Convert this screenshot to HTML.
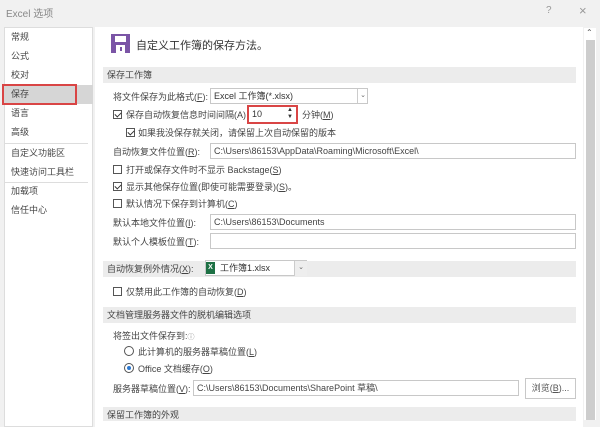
<!DOCTYPE html><html><head><meta charset="utf-8"><style>
*{margin:0;padding:0;box-sizing:border-box}
body{width:600px;height:420px;overflow:hidden;background:#f1f1f1;font-family:"Liberation Sans","Noto Sans CJK SC",sans-serif;font-size:9px;color:#444;position:relative}
.a{position:absolute;white-space:nowrap}
.nav{position:absolute;left:4px;top:27px;width:89px;height:400px;background:#fff;border:1px solid #ddd}
.main{position:absolute;left:95px;top:27px;width:488px;height:400px;background:#fff}
.bar{position:absolute;left:103px;width:473px;height:16px;background:#ececec;font-size:9px;padding:0 4px;line-height:16px;color:#444}
.inp{position:absolute;height:16px;border:1px solid #c8c8c8;background:#fff;padding:0 3px;line-height:14px;font-size:9px;color:#444}
.cb{position:absolute;width:9px;height:9px;border:1px solid #555;background:#fff}
.cb.on::after{content:"";position:absolute;left:2px;top:0px;width:3px;height:5px;border:solid #333;border-width:0 1px 1px 0;transform:rotate(45deg)}
.rd{position:absolute;width:10px;height:10px;border:1px solid #555;border-radius:50%;background:#fff}
.sep{position:absolute;left:4px;width:84px;height:1px;background:#ddd}
</style></head><body>
<div class="a" style="left:6px;top:5px;color:#888;font-size:10px">Excel 选项</div>
<div class="a" style="left:546px;top:5px;color:#999;font-size:10px">?</div>
<div class="a" style="left:579px;top:3px;color:#999;font-size:13px">×</div>
<div class="nav"></div>
<div class="a" style="left:4px;top:85px;width:89px;height:19px;background:#d6d6d6"></div>
<div class="a" style="left:2px;top:84px;width:75px;height:21px;border:2px solid #d94545"></div>
<div class="a" style="left:11px;top:28px;line-height:19px;color:#444">常规<br>公式<br>校对<br>保存<br>语言<br>高级</div>
<div class="sep" style="top:143px"></div>
<div class="a" style="left:11px;top:144px;line-height:19px;color:#444">自定义功能区<br>快速访问工具栏</div>
<div class="sep" style="top:182px"></div>
<div class="a" style="left:11px;top:182px;line-height:19px;color:#444">加载项<br>信任中心</div>
<div class="main"></div>
<div class="a" style="left:584px;top:28px;width:12px;height:392px;background:#fff"></div>
<div class="a" style="left:586px;top:40px;width:9px;height:380px;background:#cdcdcd"></div>
<div class="a" style="left:586px;top:28px;font-size:8px;color:#555">⌃</div>
<svg class="a" style="left:111px;top:34px" width="19" height="19" viewBox="0 0 19 19"><rect width="19" height="19" fill="#7b55a6"/><rect x="4" y="2" width="11" height="6" fill="#fff"/><rect x="5" y="11" width="9" height="8" fill="#fff"/><rect x="9" y="13" width="2" height="4" fill="#7b55a6"/></svg>
<div class="a" style="left:136px;top:37px;font-size:11px;color:#333">自定义工作簿的保存方法。</div>
<div class="bar" style="top:67px">保存工作簿</div>
<div class="a" style="left:113px;top:90px">将文件保存为此格式(<u>F</u>):</div>
<div class="inp" style="left:210px;top:88px;width:158px;color:#333">Excel 工作簿(*.xlsx)</div>
<div class="a" style="left:357px;top:89px;width:11px;height:14px;border-left:1px solid #ccc;font-size:7px;color:#666;text-align:center;line-height:14px">⌄</div>
<div class="cb on" style="left:113px;top:110px"></div>
<div class="a" style="left:126px;top:108px">保存自动恢复信息时间间隔(A)</div>
<div class="a" style="left:247px;top:105px;width:51px;height:19px;border:2px solid #d94545;background:#fff;padding:0 3px;line-height:15px;color:#333">10</div>
<div class="a" style="left:285px;top:107px;width:10px;height:15px;font-size:6px;line-height:7px;color:#333;text-align:center">▲<br>▼</div>
<div class="a" style="left:302px;top:108px">分钟(<u>M</u>)</div>
<div class="cb on" style="left:126px;top:128px"></div>
<div class="a" style="left:138px;top:126px">如果我没保存就关闭，请保留上次自动保留的版本</div>
<div class="a" style="left:113px;top:145px">自动恢复文件位置(<u>R</u>):</div>
<div class="inp" style="left:210px;top:143px;width:366px">C:\Users\86153\AppData\Roaming\Microsoft\Excel\</div>
<div class="cb" style="left:113px;top:165px"></div>
<div class="a" style="left:126px;top:163px">打开或保存文件时不显示 Backstage(<u>S</u>)</div>
<div class="cb on" style="left:113px;top:182px"></div>
<div class="a" style="left:126px;top:180px">显示其他保存位置(即使可能需要登录)(<u>S</u>)。</div>
<div class="cb" style="left:113px;top:199px"></div>
<div class="a" style="left:126px;top:197px">默认情况下保存到计算机(<u>C</u>)</div>
<div class="a" style="left:113px;top:216px">默认本地文件位置(<u>I</u>):</div>
<div class="inp" style="left:210px;top:214px;width:366px">C:\Users\86153\Documents</div>
<div class="a" style="left:113px;top:235px">默认个人模板位置(<u>T</u>):</div>
<div class="inp" style="left:210px;top:233px;width:366px"></div>
<div class="bar" style="top:261px">自动恢复例外情况(<u>X</u>):</div>
<div class="inp" style="left:205px;top:260px;width:102px;color:#333;padding-left:14px">工作簿1.xlsx</div>
<div class="a" style="left:206px;top:262px;width:9px;height:12px;background:#1e7145;color:#fff;font-size:7px;text-align:center;line-height:12px;font-weight:bold">X</div>
<div class="a" style="left:294px;top:261px;width:13px;height:15px;border-left:1px solid #ccc;background:#eee;font-size:7px;color:#666;text-align:center;line-height:14px">⌄</div>
<div class="cb" style="left:113px;top:287px"></div>
<div class="a" style="left:126px;top:285px">仅禁用此工作簿的自动恢复(<u>D</u>)</div>
<div class="bar" style="top:307px">文档管理服务器文件的脱机编辑选项</div>
<div class="a" style="left:113px;top:329px">将签出文件保存到:<span style="font-size:7px;color:#888">ⓘ</span></div>
<div class="rd" style="left:124px;top:346px"></div>
<div class="a" style="left:138px;top:345px">此计算机的服务器草稿位置(<u>L</u>)</div>
<div class="rd" style="left:124px;top:363px"><div style="position:absolute;left:2px;top:2px;width:4px;height:4px;border-radius:50%;background:#2b78d0"></div></div>
<div class="a" style="left:138px;top:362px">Office 文档缓存(<u>O</u>)</div>
<div class="a" style="left:113px;top:382px">服务器草稿位置(<u>V</u>):</div>
<div class="inp" style="left:193px;top:380px;width:326px">C:\Users\86153\Documents\SharePoint 草稿\</div>
<div class="a" style="left:525px;top:378px;width:51px;height:21px;border:1px solid #c8c8c8;background:#fff;text-align:center;line-height:19px;color:#555">浏览(<u>B</u>)...</div>
<div class="bar" style="top:407px;height:14px">保留工作簿的外观</div>
</body></html>
